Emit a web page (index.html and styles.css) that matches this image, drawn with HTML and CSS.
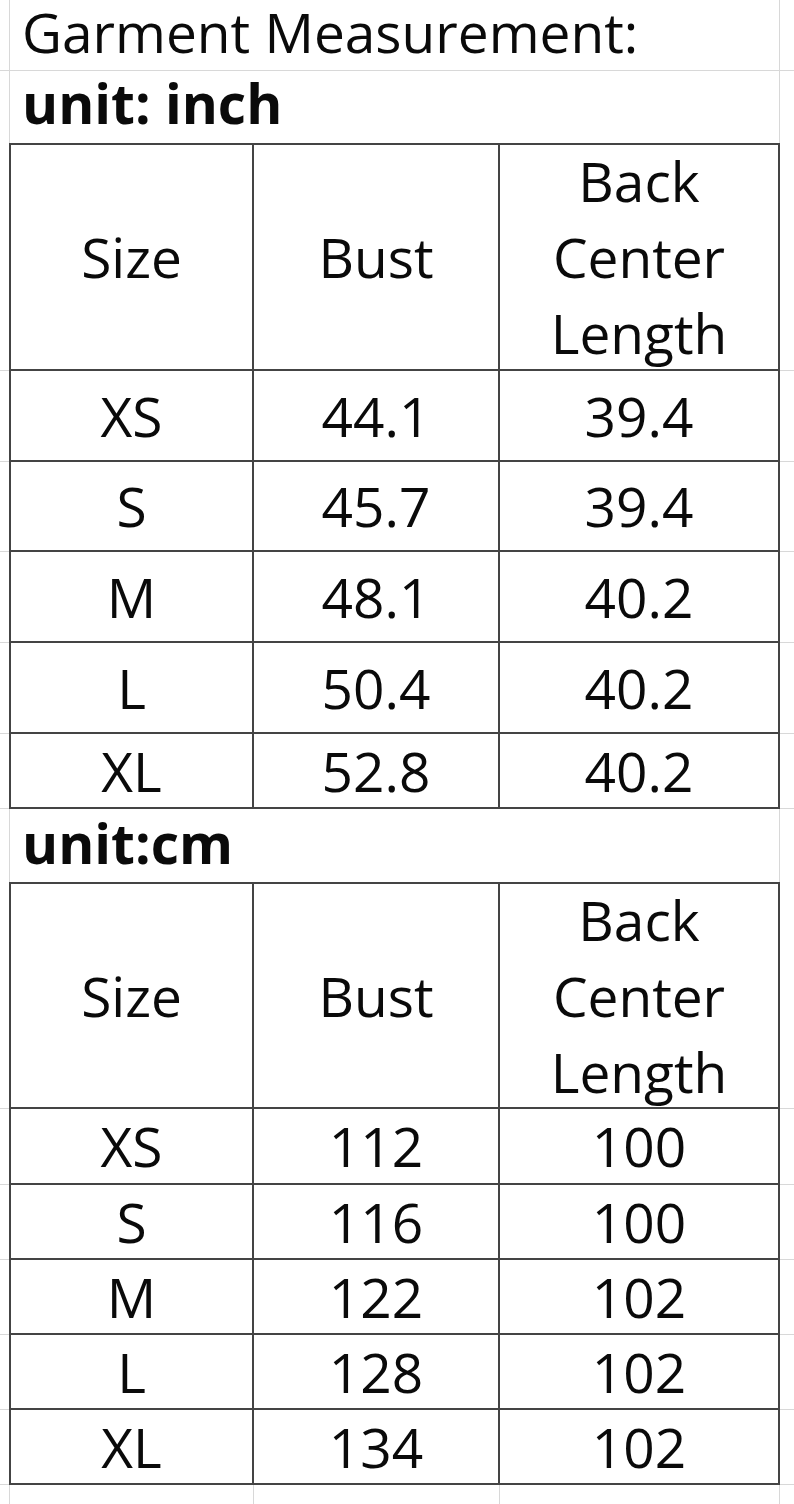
FILE: index.html
```html
<!DOCTYPE html>
<html>
<head>
<meta charset="utf-8">
<link rel="stylesheet" href="styles.css">
</head>
<body>
<div class="sheet">
  <div class="line title-row">
    <div class="gut"></div>
    <div class="merged"><span class="title">Garment Measurement:</span></div>
    <div class="gut-r"></div>
  </div>
  <div class="line unit-row">
    <div class="gut"></div>
    <div class="merged"><span class="unit">unit: inch</span></div>
    <div class="gut-r"></div>
  </div>

  <div class="tbl t1">
    <div class="gut g-head"></div>
    <div class="c c1 top head">Size</div>
    <div class="c c2 top head">Bust</div>
    <div class="c c3 top head ml">Back<br>Center<br>Length</div>
    <div class="gut-r g-head"></div>

    <div class="gut r91"></div><div class="c c1 r91">XS</div><div class="c c2 r91">44.1</div><div class="c c3 r91">39.4</div><div class="gut-r r91"></div>
    <div class="gut r90"></div><div class="c c1 r90">S</div><div class="c c2 r90">45.7</div><div class="c c3 r90">39.4</div><div class="gut-r r90"></div>
    <div class="gut r91"></div><div class="c c1 r91">M</div><div class="c c2 r91">48.1</div><div class="c c3 r91">40.2</div><div class="gut-r r91"></div>
    <div class="gut r91"></div><div class="c c1 r91">L</div><div class="c c2 r91">50.4</div><div class="c c3 r91">40.2</div><div class="gut-r r91"></div>
    <div class="gut r75"></div><div class="c c1 r75">XL</div><div class="c c2 r75">52.8</div><div class="c c3 r75">40.2</div><div class="gut-r r75"></div>
  </div>

  <div class="line unit-row2">
    <div class="gut"></div>
    <div class="merged"><span class="unit">unit:cm</span></div>
    <div class="gut-r"></div>
  </div>

  <div class="tbl t2">
    <div class="gut g-head2"></div>
    <div class="c c1 top head2">Size</div>
    <div class="c c2 top head2">Bust</div>
    <div class="c c3 top head2 ml">Back<br>Center<br>Length</div>
    <div class="gut-r g-head2"></div>

    <div class="gut r76"></div><div class="c c1 r76">XS</div><div class="c c2 r76">112</div><div class="c c3 r76">100</div><div class="gut-r r76"></div>
    <div class="gut r75"></div><div class="c c1 r75">S</div><div class="c c2 r75">116</div><div class="c c3 r75">100</div><div class="gut-r r75"></div>
    <div class="gut r75"></div><div class="c c1 r75">M</div><div class="c c2 r75">122</div><div class="c c3 r75">102</div><div class="gut-r r75"></div>
    <div class="gut r75"></div><div class="c c1 r75">L</div><div class="c c2 r75">128</div><div class="c c3 r75">102</div><div class="gut-r r75"></div>
    <div class="gut r75"></div><div class="c c1 r75">XL</div><div class="c c2 r75">134</div><div class="c c3 r75">102</div><div class="gut-r r75"></div>
  </div>

  <div class="tail">
    <div class="gut"></div>
    <div class="tc tc1"></div>
    <div class="tc tc2"></div>
    <div class="tc tc3"></div>
    <div class="gut-r"></div>
  </div>
</div>
</body>
</html>
```
FILE: styles.css
```css
html, body {
  margin: 0;
  padding: 0;
  background: #ffffff;
}
.sheet {
  width: 794px;
  height: 1504px;
  overflow: hidden;
  font-family: "Open Sans", "Lato", sans-serif;
  color: #0a0a0a;
}
.line {
  display: flex;
  box-sizing: border-box;
  border-bottom: 1px solid #d8d8d8;
}
.title-row { height: 71px; }
.unit-row { height: 72px; border-bottom: none; }
.unit-row2 { height: 73px; border-bottom: none; }
.gut { width: 9px; flex: none; box-sizing: border-box; }
.gut-r { flex: 1; box-sizing: border-box; }
.merged {
  width: 771px;
  flex: none;
  box-sizing: border-box;
  border-left: 1px solid #d8d8d8;
  border-right: 1px solid #d8d8d8;
  padding-left: 12px;
  display: flex;
  align-items: center;
}
.title-row .merged { padding-bottom: 6px; }
.unit-row .merged { padding-bottom: 8px; }
.unit-row2 .merged { padding-bottom: 6px; }
.title {
  font-size: 55px;
  font-weight: 400;
  line-height: 64px;
}
.unit {
  font-size: 55px;
  font-weight: 700;
  line-height: 64px;
}
.tbl {
  display: grid;
  grid-template-columns: 9px 245px 246px 280px 14px;
}
.tbl .gut, .tbl .gut-r {
  border-bottom: 1px solid #d8d8d8;
}
.c {
  box-sizing: border-box;
  border-right: 2px solid #444444;
  border-bottom: 2px solid #444444;
  display: flex;
  align-items: center;
  justify-content: center;
  text-align: center;
  font-size: 55px;
  line-height: 1.2;
}
.c1 { border-left: 2px solid #444444; }
.top { border-top: 2px solid #444444; }
.ml { line-height: 76px; }
.head, .g-head { height: 228px; }
.head2, .g-head2 { height: 227px; }
.r91 { height: 91px; }
.r90 { height: 90px; }
.r76 { height: 76px; }
.r75 { height: 75px; }
.tail {
  display: flex;
  height: 40px;
}
.tc {
  flex: none;
  box-sizing: border-box;
  border-right: 1px solid #d8d8d8;
}
.tc1 { width: 245px; border-left: 1px solid #d8d8d8; }
.tc2 { width: 246px; }
.tc3 { width: 280px; }
```
